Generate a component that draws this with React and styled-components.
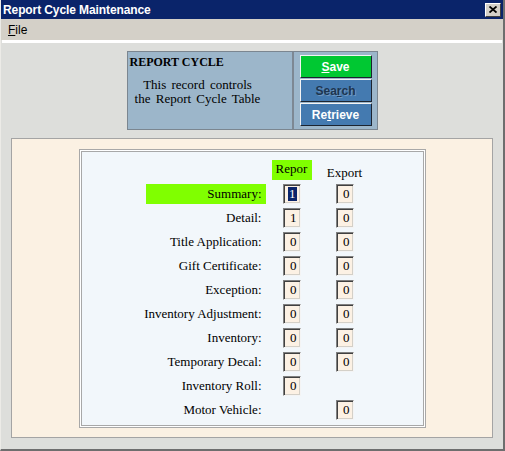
import React from 'react'
import styled, { createGlobalStyle } from 'styled-components';

const GlobalStyle = createGlobalStyle`
  html, body {
    margin: 0;
    padding: 0;
    background: #dddedb;
  }
  * {
    box-sizing: border-box;
  }
`;

const Window = styled.div`
  width: 505px;
  height: 451px;
  display: flex;
  flex-direction: column;
  background: #dddedb;
  border-left: 1px solid #ecebe7;
  border-right: 2px solid #6e6e6e;
  border-bottom: 2px solid #6e6e6e;
  overflow: hidden;
`;

const TitleBar = styled.div`
  height: 19px;
  flex: none;
  display: flex;
  align-items: center;
  justify-content: space-between;
  background: #0a246a;
  padding: 0 2px 0 2px;
`;

const Title = styled.span`
  color: #fff;
  font-family: "Liberation Sans", Arial, sans-serif;
  font-weight: bold;
  font-size: 12px;
  letter-spacing: -0.1px;
`;

const CloseButton = styled.div`
  width: 16px;
  height: 14px;
  display: flex;
  align-items: center;
  justify-content: center;
  background: #d4d0c8;
  border: 1px solid;
  border-color: #fff #404040 #404040 #fff;
`;

const MenuBar = styled.div`
  height: 21px;
  flex: none;
  display: flex;
  align-items: center;
  background: #d4d0c8;
  padding-left: 7px;
  font-family: "Liberation Sans", Arial, sans-serif;
  font-size: 12px;
  color: #000;
`;

const Rule = styled.div`
  height: 3px;
  flex: none;
  margin: 0 1px;
  background: #fff;
`;

const Content = styled.div`
  flex: 1;
  display: flex;
  flex-direction: column;
  align-items: center;
  padding-top: 8px;
`;

const HeaderPanel = styled.div`
  width: 251px;
  height: 79px;
  display: flex;
  background: #9cb6ca;
  border: 1px solid #7b8690;
`;

const HeaderText = styled.div`
  width: 164px;
  padding: 3px 0 0 2px;
  font-family: "Liberation Serif", "Times New Roman", serif;
  color: #000;
`;

const HeaderTitle = styled.div`
  font-weight: bold;
  font-size: 12px;
  line-height: 14px;
`;

const HeaderDesc = styled.div`
  width: 136px;
  margin-top: 9px;
  text-align: center;
  font-size: 13px;
  line-height: 14px;
  word-spacing: 2px;
  white-space: nowrap;
`;

const ButtonColumn = styled.div`
  flex: 1;
  display: flex;
  flex-direction: column;
  gap: 1px;
  padding: 3px 0 0 6px;
  border-left: 2px solid #7d8893;
`;

const ActionButton = styled.div`
  width: 72px;
  height: 23px;
  display: flex;
  align-items: center;
  justify-content: center;
  background: ${p => p.$green ? '#00c832' : '#447ab0'};
  border: 1px solid;
  border-color: #f4f4f4 #1c2430 #1c2430 #f4f4f4;
  font-family: "Liberation Sans", Arial, sans-serif;
  font-weight: bold;
  font-size: 12px;
  color: ${p => p.$disabled ? '#1d3550' : '#fff'};
  text-shadow: ${p => p.$disabled ? '1px 1px 0 #6f98c0' : 'none'};
`;

const FormArea = styled.div`
  width: 482px;
  height: 300px;
  margin-top: 8px;
  display: flex;
  justify-content: center;
  align-items: flex-start;
  padding-top: 10px;
  background: #fbf1e3;
  border: 1px solid #a4a4a4;
`;

const FieldPanel = styled.div`
  width: 347px;
  height: 279px;
  padding: 10px 0 0 66px;
  background: #f2f7fb;
  border: 1px solid #a8a8a8;
  box-shadow: inset 0 0 0 1px #fff, inset 0 0 0 2px #a8a8a8;
`;

const FieldGrid = styled.div`
  display: grid;
  grid-template-columns: 120px 46px 53px;
  grid-auto-rows: 20px;
  row-gap: 4px;
  font-family: "Liberation Serif", "Times New Roman", serif;
  font-size: 13px;
  color: #000;
`;

const ColHead = styled.div`
  justify-self: end;
  width: 40px;
  height: 20px;
  display: flex;
  justify-content: center;
  align-items: ${p => p.$active ? 'center' : 'flex-end'};
  padding-bottom: ${p => p.$active ? '2px' : '0'};
  background: ${p => p.$active ? '#80ff00' : 'transparent'};
  line-height: 14px;
`;

const Label = styled.div`
  display: flex;
  align-items: center;
  justify-content: flex-end;
  padding-right: 4px;
  white-space: nowrap;
  background: ${p => p.$highlight ? '#80ff00' : 'transparent'};
`;

const Cell = styled.div`
  justify-self: end;
  width: 40px;
  display: flex;
  justify-content: center;
`;

const ValueBox = styled.div`
  width: 18px;
  height: 20px;
  display: flex;
  align-items: center;
  justify-content: flex-end;
  padding-right: 3px;
  background: #fcf1e4;
  border: 1px solid;
  border-color: #808080 #f4f4f4 #f4f4f4 #808080;
  box-shadow: inset 1px 1px 0 #404040, inset -1px -1px 0 #d4d0c8;
  line-height: 14px;
`;

const Selected = styled.span`
  background: #0a246a;
  color: #fff;
  padding: 0 1px;
`;

const rows = [
  { label: 'Summary:', report: '1', exp: '0', highlight: true, selected: true },
  { label: 'Detail:', report: '1', exp: '0' },
  { label: 'Title Application:', report: '0', exp: '0' },
  { label: 'Gift Certificate:', report: '0', exp: '0' },
  { label: 'Exception:', report: '0', exp: '0' },
  { label: 'Inventory Adjustment:', report: '0', exp: '0' },
  { label: 'Inventory:', report: '0', exp: '0' },
  { label: 'Temporary Decal:', report: '0', exp: '0' },
  { label: 'Inventory Roll:', report: '0', exp: null },
  { label: 'Motor Vehicle:', report: null, exp: '0' },
];

function App() {
  return (
    <Window>
      <GlobalStyle />
      <TitleBar>
        <Title>Report Cycle Maintenance</Title>
        <CloseButton>
          <svg width="8" height="7" viewBox="0 0 8 7">
            <path d="M0.5 0.5 L7.5 6.5 M7.5 0.5 L0.5 6.5" stroke="#000" strokeWidth="1.8" fill="none" />
          </svg>
        </CloseButton>
      </TitleBar>
      <MenuBar><span><u>F</u>ile</span></MenuBar>
      <Rule />
      <Content>
        <HeaderPanel>
          <HeaderText>
            <HeaderTitle>REPORT CYCLE</HeaderTitle>
            <HeaderDesc>This record controls<br />the Report Cycle Table</HeaderDesc>
          </HeaderText>
          <ButtonColumn>
            <ActionButton $green><span><u>S</u>ave</span></ActionButton>
            <ActionButton $disabled><span>Sea<u>r</u>ch</span></ActionButton>
            <ActionButton><span>Re<u>t</u>rieve</span></ActionButton>
          </ButtonColumn>
        </HeaderPanel>
        <FormArea>
          <FieldPanel>
            <FieldGrid>
              <div />
              <ColHead $active>Repor</ColHead>
              <ColHead>Export</ColHead>
              {rows.map(r => (
                <React.Fragment key={r.label}>
                  <Label $highlight={r.highlight}>{r.label}</Label>
                  <Cell>
                    {r.report !== null && (
                      <ValueBox>{r.selected ? <Selected>{r.report}</Selected> : r.report}</ValueBox>
                    )}
                  </Cell>
                  <Cell>
                    {r.exp !== null && <ValueBox>{r.exp}</ValueBox>}
                  </Cell>
                </React.Fragment>
              ))}
            </FieldGrid>
          </FieldPanel>
        </FormArea>
      </Content>
    </Window>
  )
}

export default App
